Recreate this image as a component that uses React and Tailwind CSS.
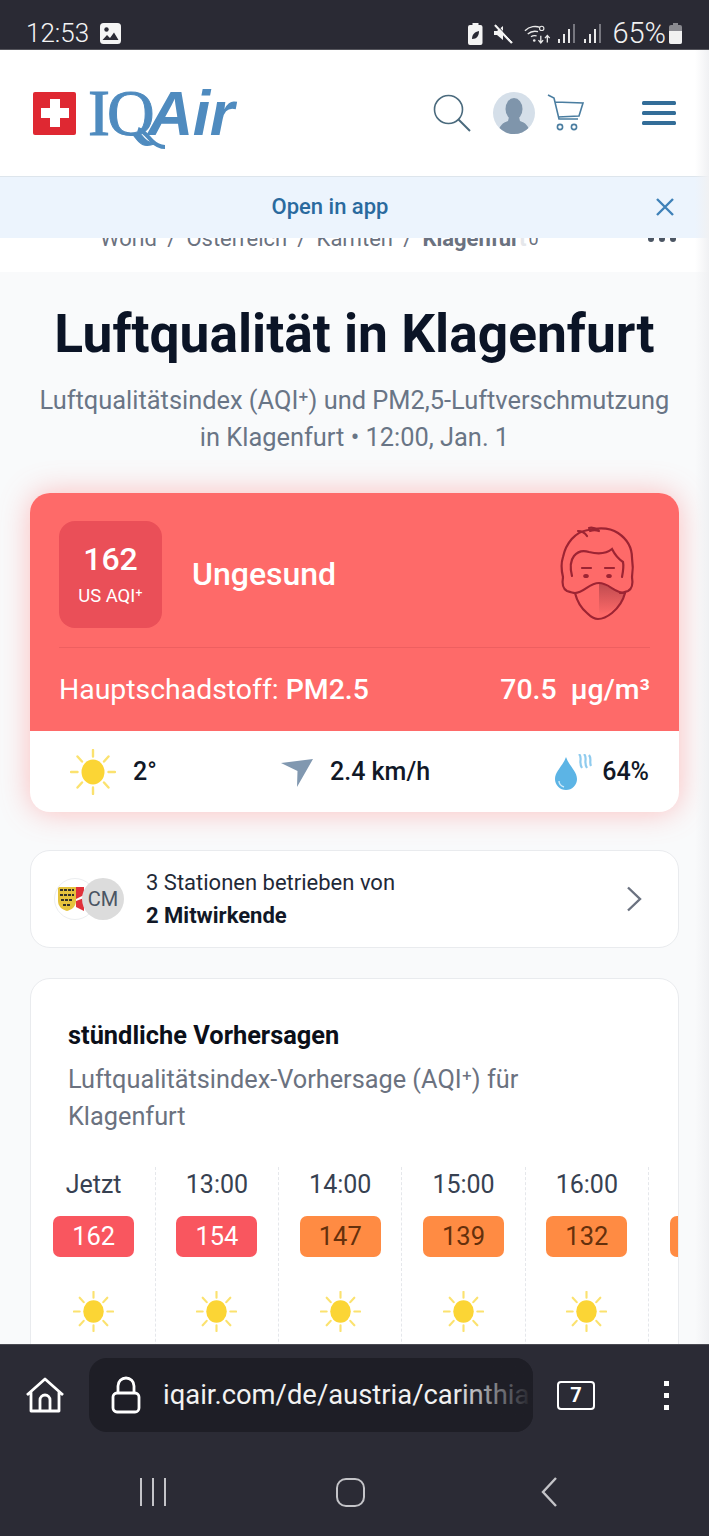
import React from "react";

const Sun = ({ size = 46 }) => (
  <svg width={size} height={size} viewBox="0 0 46 46" fill="none">
    <ellipse cx="23" cy="23" rx="11.5" ry="12.5" fill="#fbd535" />
    <g stroke="#fbe26f" strokeWidth="2.4" strokeLinecap="round">
      <path d="M23 1v6.5M23 38.5V45M1 23h6.5M38.5 23H45M7.5 7.5l4.5 5M38.5 7.5l-4.5 5M7.5 38.5l4.5-5M38.5 38.5l-4.5-5" />
    </g>
  </svg>
);

const StatusIcons = () => (
  <div className="flex items-center">
    <svg width="15" height="22" viewBox="0 0 15 22" className="mr-[9px]">
      <path d="M4.500 0h6v2h2a2 2 0 0 1 2 2v16a2 2 0 0 1-2 2H2a2 2 0 0 1-2-2V4a2 2 0 0 1 2-2h2.500z" fill="#f4f4f4" />
      <path d="M4 16c0-4.500 2.500-7 7-8 0 4.500-2 8-7 8z" fill="#2a2a34" />
    </svg>
    <svg width="22" height="22" viewBox="0 0 22 22" className="mr-[10px]">
      <path d="M2 8h3l6-5v14l-6-5H2z" fill="#f4f4f4" />
      <path d="M3 2l17 18" stroke="#f4f4f4" strokeWidth="2.4" />
      <path d="M3.500 0.500l17 18" stroke="#2a2a34" strokeWidth="1" />
    </svg>
    <svg width="28" height="22" viewBox="0 0 30 22" fill="none" className="mr-[6px]">
      <path d="M1 7.500C6 2.500 13 2 17 4M4 11c3.500-3 7.500-3.500 11-2.500M7.500 14c2-1.500 4-1.500 6-1" stroke="#e9e9e9" strokeWidth="1.500" />
      <circle cx="11" cy="18" r="1.400" fill="#e9e9e9" />
      <path d="M18 13v7M15.500 17.500l2.500 3 2.500-3M25 20v-7M22.500 15.500l2.500-3 2.500 3" stroke="#e9e9e9" strokeWidth="1.400" />
      <circle cx="19" cy="5" r="2.300" stroke="#e9e9e9" strokeWidth="1.200" />
    </svg>
    <svg width="19" height="20" viewBox="0 0 19 20" className="mr-[7px]">
      <rect x="0" y="15" width="2" height="4" fill="#e9e9e9" />
      <rect x="5" y="10" width="2" height="9" fill="#e9e9e9" />
      <rect x="10" y="5" width="2" height="14" fill="#e9e9e9" />
      <rect x="15" y="0" width="2" height="19" fill="#77777f" />
    </svg>
    <svg width="19" height="20" viewBox="0 0 19 20" className="mr-[9px]">
      <rect x="0" y="15" width="2" height="4" fill="#e9e9e9" />
      <rect x="5" y="10" width="2" height="9" fill="#e9e9e9" />
      <rect x="10" y="5" width="2" height="14" fill="#e9e9e9" />
      <rect x="15" y="0" width="2" height="19" fill="#77777f" />
    </svg>
    <span className="text-[29px] leading-none font-light text-[#f1f1f1]">65%</span>
    <svg width="15" height="21" viewBox="0 0 13 21" className="ml-[2px]">
      <path d="M4 0h5v2h2a2 2 0 0 1 2 2v15a2 2 0 0 1-2 2H2a2 2 0 0 1-2-2V4a2 2 0 0 1 2-2h2z" fill="#8a8a90" />
      <path d="M0 8h13v11a2 2 0 0 1-2 2H2a2 2 0 0 1-2-2z" fill="#f1f1f1" />
    </svg>
  </div>
);

const StatusBar = () => (
  <div className="h-[50px] shrink-0 bg-[#2a2a34] flex items-end justify-between pl-[26px] pr-[26px] pb-[1px] border-b border-[#55555c]">
    <div className="flex items-center gap-[11px]">
      <span className="text-[26px] leading-[30px] font-light text-[#f4f4f4]">12:53</span>
      <svg width="21" height="21" viewBox="0 0 21 21">
        <rect width="21" height="21" rx="3.500" fill="#f4f4f4" />
        <circle cx="6.500" cy="6.500" r="2.200" fill="#2a2a34" />
        <path d="M2.500 17l4.500-5 3 3 4-5.500 4.500 7.500z" fill="#2a2a34" />
      </svg>
    </div>
    <StatusIcons />
  </div>
);

const Logo = () => (
  <div className="flex items-center relative">
    <div className="w-[43px] h-[43px] rounded-[2px] bg-[#df2832] flex items-center justify-center">
      <svg width="32" height="32" viewBox="0 0 32 32">
        <path d="M11 2h10v9h9v10h-9v9H11v-9H2V11h9z" fill="#fff" />
      </svg>
    </div>
    <span className="ml-[12px] text-[66px] leading-[60px] tracking-[-3px] text-[#4f8bbf] [-webkit-text-stroke:1px_#4f8bbf] font-['Liberation_Serif',serif]">IQ</span>
    <span className="text-[63px] leading-[60px] tracking-[-0.5px] italic font-bold text-[#4f8bbf] font-['Liberation_Sans',sans-serif] -ml-[4px]">Air</span>
    <svg width="50" height="32" viewBox="0 0 50 32" fill="none" className="absolute left-[93px] top-[38px]">
      <path d="M12 8c6 2 9 7 14 12 4 4 8 6 13 6" stroke="#4f8bbf" strokeWidth="4" />
    </svg>
  </div>
);

const Header = () => (
  <header className="h-[126px] shrink-0 bg-white flex items-center pl-[33px] pr-[33px] justify-between">
    <Logo />
    <div className="flex items-center">
      <svg width="38" height="38" viewBox="0 0 38 38" fill="none" stroke="#4a6a7d" strokeWidth="1.600">
        <circle cx="15.500" cy="15.500" r="14" />
        <path d="M25.500 25.500L37 37" strokeWidth="2" />
      </svg>
      <div className="ml-[22px] w-[42px] h-[42px] rounded-full bg-[#d5dfe9] overflow-hidden flex justify-center">
        <svg width="34" height="42" viewBox="0 0 34 42">
          <ellipse cx="17" cy="17" rx="8.500" ry="11" fill="#7f95ab" />
          <path d="M12 25h10l1 4c5 2 9 4 10 13H1c1-9 5-11 10-13z" fill="#7f95ab" />
        </svg>
      </div>
      <svg width="38" height="38" viewBox="0 0 38 38" fill="none" stroke="#4a7da0" strokeWidth="1.600" className="ml-[12px]">
        <path d="M1 1l6 3 5 21h19M8 8l28 1-4 13-21 1" />
        <circle cx="13" cy="33" r="2.600" />
        <circle cx="27" cy="33" r="2.600" />
      </svg>
      <svg width="34" height="24" viewBox="0 0 34 24" className="ml-[57px]">
        <rect y="0" width="34" height="4" rx="1.500" fill="#336d98" />
        <rect y="10" width="34" height="4" rx="1.500" fill="#336d98" />
        <rect y="20" width="34" height="4" rx="1.500" fill="#336d98" />
      </svg>
    </div>
  </header>
);

const OpenInApp = () => (
  <div className="h-[62px] shrink-0 bg-[#ecf4fd] border-t border-[#dde5ec] flex items-center pb-[2px] relative">
    <span className="w-[660px] text-center text-[22px] font-medium text-[#2a6a9e]">Open in app</span>
    <svg width="20" height="20" viewBox="0 0 20 20" className="ml-[-5px]" fill="none" stroke="#3f81b8" strokeWidth="2.400">
      <path d="M2 2l16 16M18 2L2 18" />
    </svg>
  </div>
);

const Breadcrumb = () => (
  <div className="h-[34px] shrink-0 bg-white overflow-hidden relative pl-[100px]">
    <div className="-mt-[14px] flex items-center text-[22px] leading-[30px] text-[#6b7280] whitespace-nowrap">
      <span>World</span>
      <span className="mx-[10.2px]">/</span>
      <span>Österreich</span>
      <span className="mx-[10.2px]">/</span>
      <span>Kärnten</span>
      <span className="mx-[10.2px]">/</span>
      <span className="font-bold">Klagenfur</span>
      <span className="font-bold text-[#e5e7eb]">t</span>
      <span className="text-[18px] ml-[2px]">0</span>
    </div>
    <div className="absolute right-[33px] top-0 flex gap-[5px]">
      {[0, 1, 2].map((i) => (
        <span key={i} className="w-[6px] h-[4px] rounded-b-full bg-[#4b5563]" />
      ))}
    </div>
  </div>
);

const MaskFace = () => (
  <svg width="110" height="115" viewBox="0 0 110 115" fill="none" stroke="#9d2433" strokeWidth="2.200" strokeLinecap="round" className="-mt-[6px]">
    <defs>
      <linearGradient id="maskShade" x1="0" y1="0" x2="0" y2="1">
        <stop offset="0" stopColor="#b8474c" stopOpacity="0.9" />
        <stop offset="1" stopColor="#b8474c" stopOpacity="0" />
      </linearGradient>
    </defs>
    <path d="M59 68c8 2 15 9 25 10-1 6-5 12-10 16-5 3-10 5-15 6z" fill="url(#maskShade)" stroke="none" />
    {/* skull and jaw */}
    <path d="M23 62c-2-8-2-14 0-20 3-14 12-25 25-27 9-2 21-3 30 3 9 6 14 14 14 25 1 6 1 13 0 19" />
    <path d="M35 78c2 8 6 15 12 20 4 4 7 6 11 6s9-2 14-6c6-5 11-12 13-20" />
    {/* hair */}
    <path d="M38 16c4 0 7 2 9 5M49 13c3-1 6 0 9 2M50 16c3-1 6-1 9 0" />
    <path d="M32 61c-2-8-2-15 2-20 4-5 9-6 15-4 8 2 17 2 23-3 2 4 5 9 11 13 1 5 0 10-1 15" />
    {/* brows and eyes */}
    <path d="M42 53h9M65 53h9" />
    <ellipse cx="46" cy="61" rx="2.800" ry="2" fill="#9d2433" stroke="none" />
    <ellipse cx="69" cy="61" rx="2.800" ry="2" fill="#9d2433" stroke="none" />
    {/* ears and mask straps */}
    <path d="M23 62c-1 6 0 12 4 14 3 1 6 2 8 2M92 62c1 6 0 12-4 14-3 1-6 2-8 2" />
    <path d="M35 78c9 0 14-10 24-10s15 10 26 10" />
  </svg>
);

const AqiCard = () => (
  <section className="mx-[30px] mt-[37px] h-[319px] rounded-[20px] overflow-hidden bg-white shadow-[0_0_30px_rgba(254,106,105,0.42)]">
    <div className="h-[238px] bg-[#fe6a69] px-[29px] pt-[28px] text-white">
      <div className="h-[127px] border-b border-[#ee5f60] flex items-start justify-between">
        <div className="flex items-center">
          <div className="w-[103px] h-[107px] rounded-[16px] bg-[#ea4f58] flex flex-col items-center pt-[19px]">
            <span className="text-[32px] leading-[38px] font-medium">162</span>
            <span className="text-[18.4px] leading-[22px] mt-[7px]">US AQI⁺</span>
          </div>
          <span className="ml-[30px] text-[32px] leading-[40px] font-medium -mt-[2px]">Ungesund</span>
        </div>
        <MaskFace />
      </div>
      <div className="flex items-center justify-between h-[83px] text-[28.4px] leading-[36px]">
        <span>Hauptschadstoff: <span className="font-medium">PM2.5</span></span>
        <span className="font-medium">70.5&nbsp; µg/m³</span>
      </div>
    </div>
    <div className="h-[81px] pl-[40px] pr-[30px] flex items-center text-[#111827] font-medium text-[25px]">
      <Sun size={46} />
      <span className="ml-[17px] w-[147px]">2°</span>
      <svg width="34" height="30" viewBox="0 0 34 30">
        <path d="M1 6L33 2 17 30 17.500 14z" fill="#8198b0" strokeLinejoin="round" />
      </svg>
      <span className="ml-[16px]">2.4 km/h</span>
      <div className="flex-1" />
      <svg width="38" height="36" viewBox="0 0 38 36" fill="none">
        <path d="M12 3c3 9 11 14 11 22a11 11 0 0 1-22 0c0-8 8-13 11-22z" fill="#5cb4e5" />
        <path d="M5 27c0 3 2 5 5 6" stroke="#cfe9f8" strokeWidth="1.400" />
        <path d="M25 0c4 4-1 8 3 14M30 0c4 4-1 8 3 14M35 1c3 4 0 7 2 11" stroke="#8fcbee" strokeWidth="2.200" />
      </svg>
      <span className="ml-[10px]">64%</span>
    </div>
  </section>
);

const Contributors = () => (
  <section className="mx-[30px] mt-[38px] h-[98px] rounded-[20px] bg-white border border-[#e9ebee] flex items-center pl-[23px] pr-[36px]">
    <div className="flex w-[70px] shrink-0">
      <div className="w-[42px] h-[42px] rounded-full bg-white border border-[#eceef0] flex items-center overflow-hidden pl-[3px]">
        <svg width="26" height="28" viewBox="0 0 26 28">
          <path d="M0 2h18v14c0 6-5 9-9 10-4-1-9-4-9-10z" fill="#e5c33d" />
          <path d="M2 5h14M2 10h14M3 15h12M5 20h8" stroke="#33312a" strokeWidth="2.200" strokeDasharray="3 1" />
          <path d="M18 2h8v8l-8 4zM18 16l8-3v13l-8-4z" fill="#e0303a" />
        </svg>
      </div>
      <div className="w-[42px] h-[42px] rounded-full bg-[#dcdcdc] -ml-[14px] flex items-center justify-center text-[20px] text-[#4b5563]">CM</div>
    </div>
    <div className="ml-[22px] flex-1 text-[22px] leading-[33px] text-[#1f2937]">
      <div>3 Stationen betrieben von</div>
      <div className="font-bold text-[#111827]">2 Mitwirkende</div>
    </div>
    <svg width="16" height="26" viewBox="0 0 16 26" fill="none" stroke="#6b7280" strokeWidth="2.400">
      <path d="M2 1.500L14 13 2 24.500" />
    </svg>
  </section>
);

const hours = [
  { t: "Jetzt", v: 162, red: true },
  { t: "13:00", v: 154, red: true },
  { t: "14:00", v: 147 },
  { t: "15:00", v: 139 },
  { t: "16:00", v: 132 },
  { t: "17:00", v: 125 },
];

const Forecast = () => (
  <section className="mx-[30px] mt-[30px] h-[400px] rounded-t-[20px] bg-white border border-[#e9ebee] overflow-hidden">
    <div className="pl-[37px] pr-[100px] pt-[40px]">
      <h2 className="text-[25.4px] leading-[32px] font-bold text-[#0b0f19]">stündliche Vorhersagen</h2>
      <p className="mt-[10px] text-[25.3px] leading-[37px] text-[#6b7280]">Luftqualitätsindex-Vorhersage (AQI⁺) für Klagenfurt</p>
    </div>
    <div className="mt-[32px] flex pl-[1.500px]">
      {hours.map((h) => (
        <div
          key={h.t}
          className="w-[123.300px] h-[200px] shrink-0 border-r border-dashed border-[#e5e7eb] flex flex-col items-center"
        >
          <span className="mt-[2px] text-[25px] leading-[32px] text-[#374151]">{h.t}</span>
          <span
            className={
              h.red
                ? "mt-[15px] w-[81px] h-[41px] rounded-[7px] bg-[#f9565f] text-white text-[25.5px] leading-[41px] text-center"
                : "mt-[15px] w-[81px] h-[41px] rounded-[7px] bg-[#ff8b43] text-[#65300c] text-[25.5px] leading-[41px] text-center"
            }
          >
            {h.v}
          </span>
          <div className="mt-[34px]">
            <Sun size={41} />
          </div>
        </div>
      ))}
    </div>
  </section>
);

const BrowserBar = () => (
  <div className="h-[192px] shrink-0 bg-[#2b2b35] border-t border-[#4a4a52] relative z-10">
    <div className="h-[103px] flex items-center pl-[25px] pb-[3px]">
      <svg width="40" height="36" viewBox="0 0 40 36" fill="none" stroke="#fff" strokeWidth="2.800" strokeLinejoin="round">
        <path d="M2 18L20 2l18 16M6 15v19h28V15" />
        <path d="M15 34V23a5 5 0 0 1 10 0v11" />
      </svg>
      <div className="ml-[24px] w-[444px] h-[74px] rounded-[18px] bg-[#1e1e26] flex items-center pl-[22px] overflow-hidden relative">
        <svg width="30" height="38" viewBox="0 0 30 38" fill="none" stroke="#fff" strokeWidth="2.800" className="shrink-0">
          <rect x="2" y="17" width="26" height="19" rx="4" />
          <path d="M7 17V10a8 8 0 0 1 16 0v7" />
        </svg>
        <span className="ml-[22px] text-[27.4px] leading-[36px] text-[#f2f2f2] whitespace-nowrap">iqair.com/de/austria/carinthia</span>
        <div className="absolute right-0 top-0 h-full w-[80px] bg-gradient-to-r from-transparent to-[#1e1e26]" />
      </div>
      <div className="ml-[24px] w-[38px] h-[29px] rounded-[4px] border-2 border-white flex items-center justify-center text-[20px] font-bold text-white">7</div>
      <div className="ml-[69px] flex flex-col gap-[7px]">
        <span className="w-[5px] h-[5px] bg-white" />
        <span className="w-[5px] h-[5px] bg-white" />
        <span className="w-[5px] h-[5px] bg-white" />
      </div>
    </div>
    <div className="flex items-center pl-[140px] pt-[29px]">
      <div className="flex gap-[10px]">
        <span className="w-[2px] h-[28px] bg-[#c4c4c8]" />
        <span className="w-[2px] h-[28px] bg-[#c4c4c8]" />
        <span className="w-[2px] h-[28px] bg-[#c4c4c8]" />
      </div>
      <div className="ml-[170px] w-[29px] h-[29px] rounded-[10px] border-2 border-[#c4c4c8]" />
      <svg width="16" height="30" viewBox="0 0 16 30" fill="none" stroke="#c4c4c8" strokeWidth="2.400" className="ml-[176px]">
        <path d="M15 1L2 15l13 14" />
      </svg>
    </div>
  </div>
);

export default function App() {
  return (
    <div className="w-[709px] h-[1536px] flex flex-col overflow-hidden relative bg-[#f9fafb] font-['Roboto',sans-serif]">
      <StatusBar />
      <Header />
      <OpenInApp />
      <Breadcrumb />
      <main className="flex-1 min-h-0 overflow-hidden">
        <h1 className="mt-[33px] text-center text-[53.3px] leading-[58px] font-bold text-[#0b1426]">Luftqualität in Klagenfurt</h1>
        <p className="mt-[19px] px-[30px] text-center text-[25.4px] leading-[37px] text-[#697586]">
          Luftqualitätsindex (AQI⁺) und PM2,5-Luftverschmutzung
          <br />
          in Klagenfurt • 12:00, Jan. 1
        </p>
        <AqiCard />
        <Contributors />
        <Forecast />
      </main>
      <BrowserBar />
      <div className="absolute right-0 top-[50px] w-[14px] h-[1294px] bg-gradient-to-r from-transparent to-[#f0f1f3] pointer-events-none" />
    </div>
  );
}
